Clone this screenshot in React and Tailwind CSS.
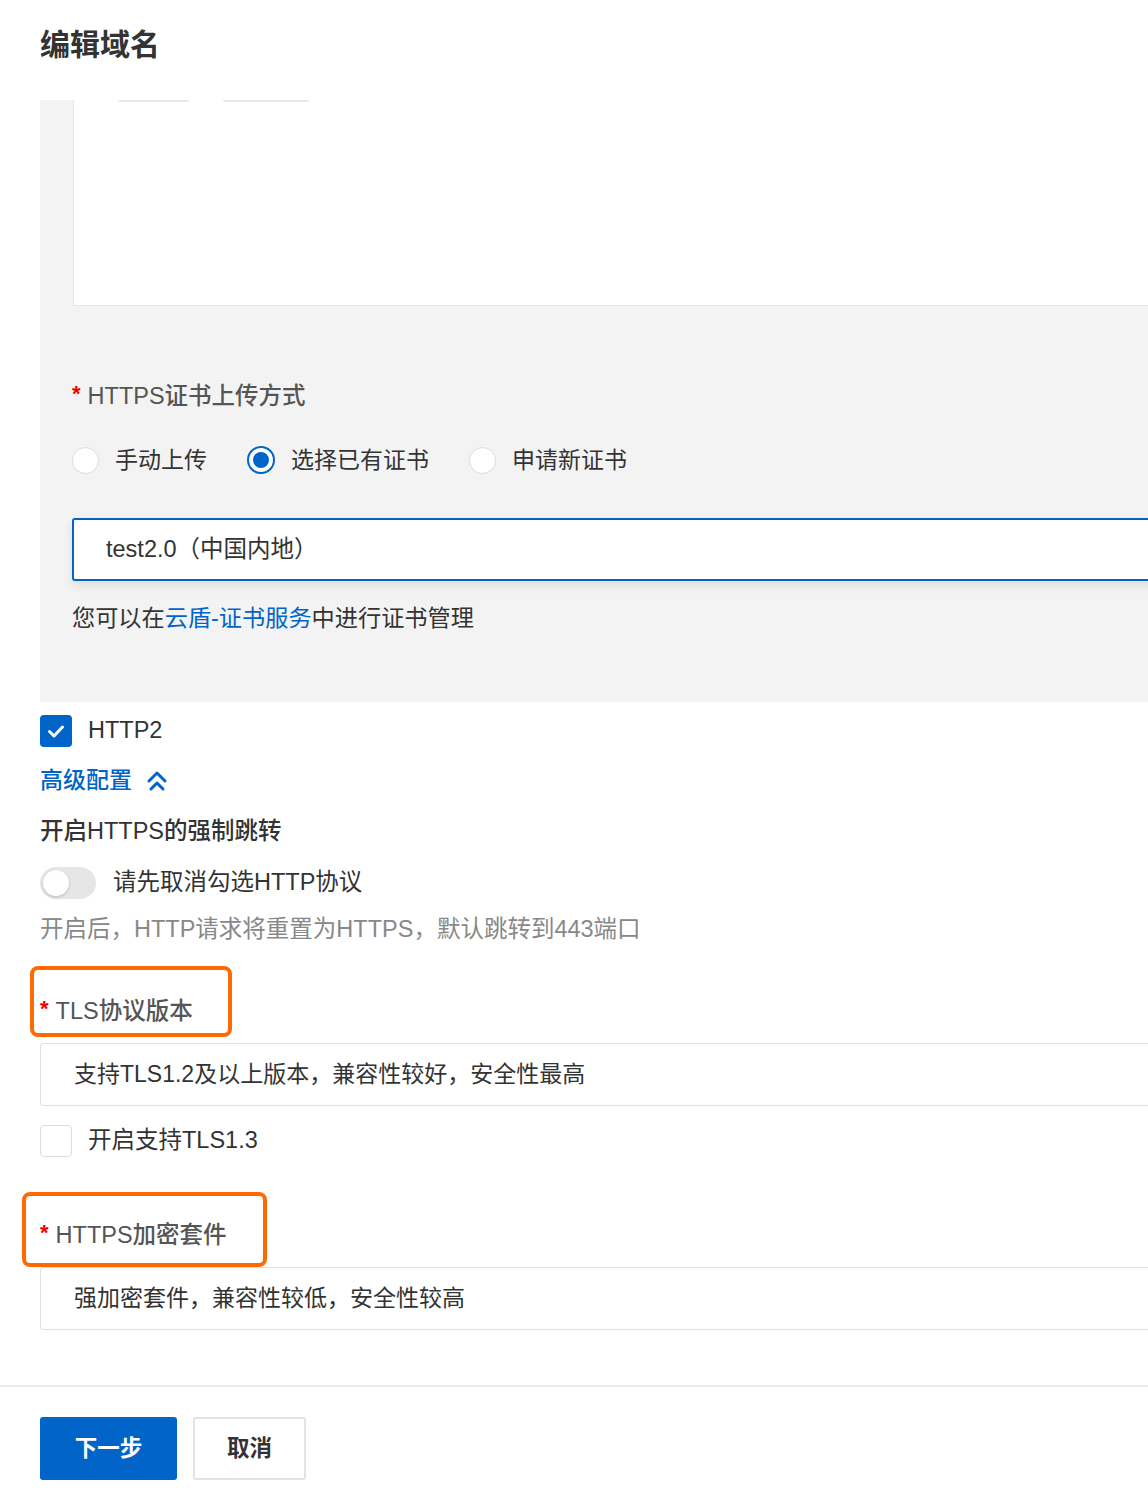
import React from 'react';

const FONT = { fontFamily: '"Liberation Sans", "Noto Sans CJK SC", sans-serif' };

const Radio = ({ checked, label }) => (
  <div className="flex items-center">
    {checked ? (
      <span className="w-[28px] h-[28px] rounded-full border-2 border-[#0064c8] bg-white flex items-center justify-center">
        <span className="w-[16px] h-[16px] rounded-full bg-[#0064c8]" />
      </span>
    ) : (
      <span className="w-[27px] h-[27px] rounded-full border border-[#dcdcdc] bg-white" />
    )}
    <span className="ml-[16px] text-[23px] leading-[30px] text-[#333]">{label}</span>
  </div>
);

const Label = ({ children }) => (
  <div className="flex items-center text-[23.5px] leading-[30px] font-medium text-[#555]">
    <span className="text-[#e00] font-bold text-[22px] mr-[7px] -mt-[4px]">*</span>
    {children}
  </div>
);

const SelectBox = ({ children }) => (
  <div className="-mr-[12px] h-[63px] bg-white border border-[#e0e0e0] rounded-[3px] flex items-center pl-[33px] text-[23px] text-[#333]">
    {children}
  </div>
);

const App = () => {
  return (
    <div className="w-[1148px] min-h-[1502px] bg-white overflow-hidden" style={FONT}>
      {/* Title */}
      <div className="h-[100px] pl-[40px] pt-[26px]">
        <h1 className="text-[30px] leading-[38px] font-bold text-[#333]">编辑域名</h1>
      </div>

      {/* Certificate panel */}
      <div className="ml-[40px] bg-[#f3f3f3] h-[602px] flex flex-col">
        <div className="ml-[33px] h-[206px] bg-white border-l border-b border-[#e6e6e6]">
          <div className="flex">
            <div className="ml-[44px] w-[71px] h-[2px] rounded-b-full bg-[#e8e8e8]" />
            <div className="ml-[34px] w-[86px] h-[2px] rounded-b-full bg-[#e8e8e8]" />
          </div>
        </div>

        <div className="ml-[32px] mt-[75px]">
          <Label>HTTPS证书上传方式</Label>
        </div>

        <div className="ml-[32px] mt-[35px] flex items-center gap-[40px] h-[28px]">
          <Radio label="手动上传" />
          <Radio checked label="选择已有证书" />
          <Radio label="申请新证书" />
        </div>

        <div className="ml-[32px] -mr-[12px] mt-[44px] h-[63px] bg-white border-2 border-[#0064c8] rounded-[3px] shadow-[0_5px_10px_rgba(0,0,0,0.08)] flex items-center pl-[32px] text-[23.5px] text-[#333]">
          test2.0（中国内地）
        </div>

        <div className="ml-[32px] mt-[22px] text-[23.2px] leading-[30px] text-[#333]">
          您可以在<span className="text-[#0064c8]">云盾-证书服务</span>中进行证书管理
        </div>
      </div>

      {/* Below panel */}
      <div className="pl-[40px]">
        <div className="mt-[13px] flex items-center h-[32px]">
          <span className="w-[32px] h-[32px] rounded-[4px] bg-[#0064c8] flex items-center justify-center">
            <svg width="22" height="22" viewBox="0 0 22 22" fill="none">
              <path d="M4.5 11.5l4.5 4.5 8.5-9" stroke="white" strokeWidth="3" strokeLinecap="round" strokeLinejoin="round" />
            </svg>
          </span>
          <span className="ml-[16px] text-[23.5px] text-[#333]">HTTP2</span>
        </div>

        <div className="mt-[18px] flex items-center h-[30px] text-[#0064c8]">
          <span className="text-[23px] leading-[30px] font-medium">高级配置</span>
          <svg className="ml-[13px]" width="24" height="24" viewBox="0 0 24 24" fill="none">
            <path d="M4 13l8-8 8 8M6 21l6-6 6 6" stroke="#0064c8" strokeWidth="3" strokeLinecap="round" strokeLinejoin="round" />
          </svg>
        </div>

        <div className="mt-[21px] text-[23.5px] leading-[30px] text-[#333] font-medium">开启HTTPS的强制跳转</div>

        <div className="mt-[21px] flex items-center h-[32px]">
          <span className="w-[56px] h-[32px] rounded-full bg-[#e6e6e6] flex items-center px-[3px]">
            <span className="w-[26px] h-[26px] rounded-full bg-white shadow-[0_1px_3px_rgba(0,0,0,0.2)]" />
          </span>
          <span className="ml-[17px] text-[23.5px] text-[#333]">请先取消勾选HTTP协议</span>
        </div>

        <div className="mt-[15px] text-[23.5px] leading-[30px] text-[#888]">
          开启后，HTTP请求将重置为HTTPS，默认跳转到443端口
        </div>

        {/* TLS */}
        <div className="mt-[22px] -ml-[10px] w-[202px] h-[71px] border-4 border-[#ff6a00] rounded-[8px] pl-[6px] pt-[26px]">
          <Label>TLS协议版本</Label>
        </div>
        <div className="mt-[6px]">
          <SelectBox>支持TLS1.2及以上版本，兼容性较好，安全性最高</SelectBox>
        </div>

        <div className="mt-[19px] flex items-center h-[32px]">
          <span className="w-[32px] h-[32px] rounded-[4px] bg-white border border-[#dcdcdc]" />
          <span className="ml-[16px] text-[23.5px] text-[#333]">开启支持TLS1.3</span>
        </div>

        {/* Cipher suite */}
        <div className="mt-[35px] -ml-[18px] w-[245px] h-[75px] border-4 border-[#ff6a00] rounded-[8px] pl-[14px] pt-[24px]">
          <Label>HTTPS加密套件</Label>
        </div>
        <SelectBox>强加密套件，兼容性较低，安全性较高</SelectBox>
      </div>

      <div className="mt-[55px] h-[2px] bg-[#ebebeb]" />

      <div className="pl-[40px] mt-[30px] flex gap-[16px]">
        <button className="w-[137px] h-[63px] rounded-[3px] bg-[#0064c8] text-white text-[22.5px] font-bold">下一步</button>
        <button className="w-[113px] h-[63px] rounded-[3px] bg-white border-2 border-[#e3e3e3] text-[#333] text-[22.5px] font-bold">取消</button>
      </div>
    </div>
  );
};

export default App;
